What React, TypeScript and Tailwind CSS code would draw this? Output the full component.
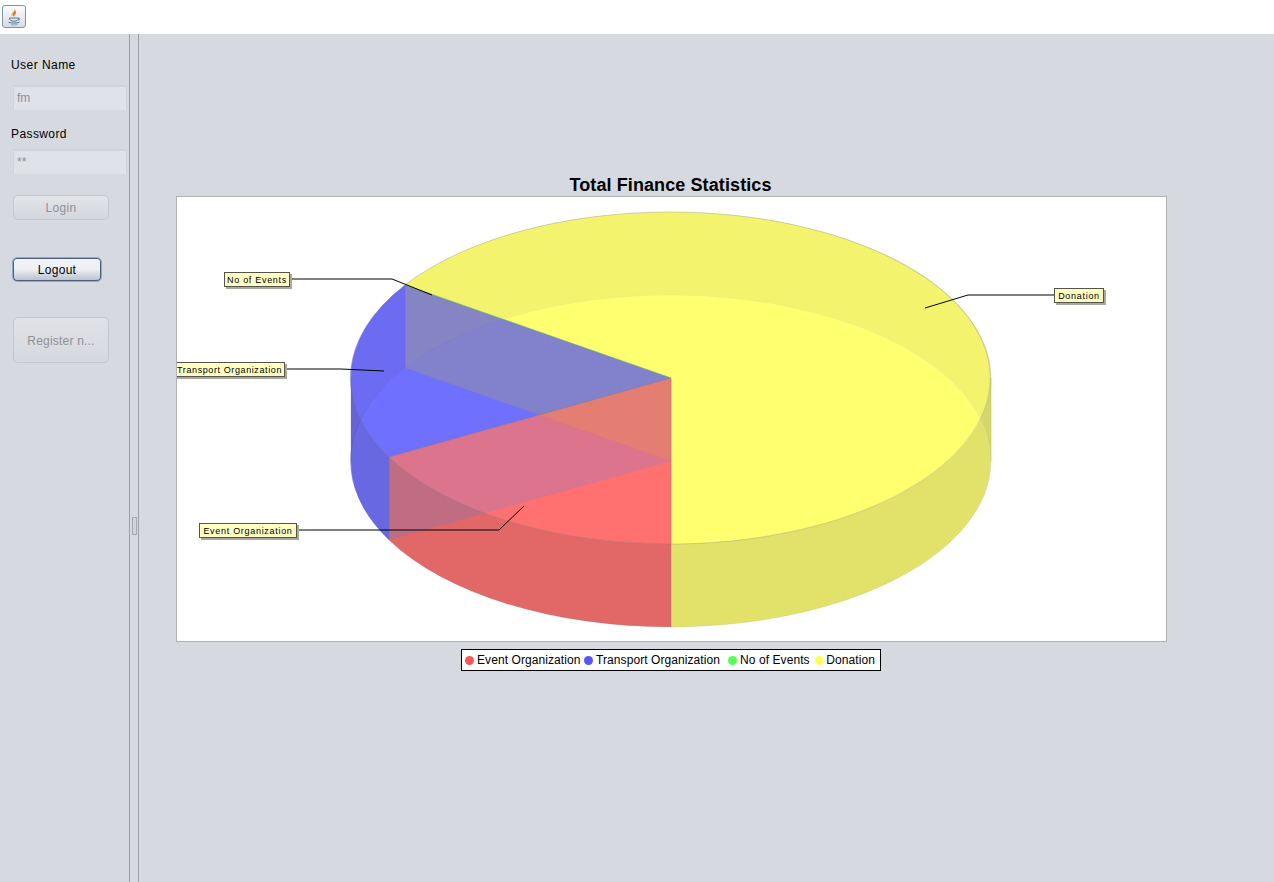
const RX = 320;
const RY = 166;
const arc = (large: number, sweep: number, x: number, y: number) =>
  `A${RX} ${RY} 0 ${large} ${sweep} ${x} ${y}`;

const RED = "#ff5555";
const BLUE = "#5555ff";
const YELLOW = "#ffff55";
const RED_WALL = "#d14a4a";
const BLUE_WALL = "#4a4ad1";
const YELLOW_WALL = "#d1d14e";

// one wedge of the pie, cy moves it between the lid and the floor
function wedges(cy: number) {
  const d = cy - 378;
  return [
    { fill: YELLOW, d: `M671 ${cy}L671 ${544 + d}${arc(1, 0, 405, 285 + d)}Z` },
    { fill: BLUE, d: `M671 ${cy}L405 ${285 + d}${arc(0, 0, 389, 457 + d)}Z` },
    { fill: RED, d: `M671 ${cy}L389 ${457 + d}${arc(0, 0, 671, 544 + d)}Z` },
  ];
}

// the cuts through the middle are much paler than the rim
const cuts = [
  { fill: YELLOW_WALL, opacity: 0.6, d: `M405 285L671 378L671 461L405 368Z` },
  { fill: BLUE_WALL, opacity: 0.2, d: `M405 285L671 378L671 461L405 368Z` },
  { fill: "#b4afbe", opacity: 0.5, d: `M389 457L671 378L671 461L389 540Z` },
];

const rim = [
  { fill: YELLOW_WALL, d: `M991 378${arc(0, 0, 671, 212)}${arc(0, 0, 405, 285)}L405 368${arc(0, 1, 671, 295)}${arc(0, 1, 991, 461)}Z` },
  { fill: BLUE_WALL, d: `M405 285${arc(0, 0, 351, 378)}L351 461${arc(0, 1, 405, 368)}Z` },
  { fill: BLUE_WALL, d: `M351 378${arc(0, 0, 389, 457)}L389 540${arc(0, 1, 351, 461)}Z` },
  { fill: RED_WALL, d: `M389 457${arc(0, 0, 671, 544)}L671 627${arc(0, 1, 389, 540)}Z` },
  { fill: YELLOW_WALL, d: `M671 544${arc(0, 0, 991, 378)}L991 461${arc(0, 1, 671, 627)}Z` },
];

const links = [
  "289,279 392,279 432,295",
  "287,369 341,369 384,371",
  "299,530 499,530 524,506",
  "1054,295 968,295 925,308",
];

const labels = [
  { text: "No of Events", box: "left-[47px] top-[75px] w-[66px] text-center tracking-[0.7px]" },
  { text: "Transport Organization", box: "left-[-4px] top-[165px] w-[112px] text-right pr-[2px] tracking-[0.6px]" },
  { text: "Event Organization", box: "left-[22px] top-[326px] w-[98px] text-center tracking-[0.7px]" },
  { text: "Donation", box: "left-[877px] top-[91px] w-[50px] text-center tracking-[0.7px]" },
];

const legend = [
  { name: "Event Organization", dot: "bg-[#ff5555]", width: "w-[119px]" },
  { name: "Transport Organization", dot: "bg-[#5555ff]", width: "w-[144px]" },
  { name: "No of Events", dot: "bg-[#55ff55]", width: "w-[87px]" },
  { name: "Donation", dot: "bg-[#ffff55]", width: "w-[60px]" },
];

function PieChart() {
  return (
    <svg viewBox="177 197 989 444" width={989} height={444} className="block">
      {wedges(461).map((w) => (
        <path key={w.fill} d={w.d} fill={w.fill} fillOpacity={0.6} />
      ))}
      {cuts.map((w, i) => (
        <path key={i} d={w.d} fill={w.fill} fillOpacity={w.opacity} stroke="#808080" strokeOpacity={0.15} strokeWidth={0.8} />
      ))}
      {rim.map((w, i) => (
        <path key={i} d={w.d} fill={w.fill} fillOpacity={0.62} stroke="#808080" strokeOpacity={0.18} strokeWidth={0.8} />
      ))}
      {wedges(378).map((w) => (
        <path key={w.fill} d={w.d} fill={w.fill} fillOpacity={0.6} stroke="#808080" strokeOpacity={0.3} strokeWidth={0.8} />
      ))}
      <line x1={405} y1={285} x2={671} y2={378} stroke="#55ff55" strokeOpacity={0.4} strokeWidth={0.8} />
      {links.map((p) => (
        <polyline key={p} points={p} fill="none" stroke="#000" strokeWidth={1} />
      ))}
    </svg>
  );
}

function JavaIcon() {
  return (
    <svg viewBox="0 0 16 18" width={16} height={18}>
      <path d="M8.5 1C9.5 3 6.5 4 6.5 6C6.5 7 7.2 8 8 8.8C7.8 7.5 9.8 6.5 10 5C10.1 4 9.5 2 8.5 1Z" fill="#e8762b" />
      <path d="M7 4.5C6 5.5 5.5 6.5 6 8" fill="none" stroke="#f0a050" strokeWidth={0.8} />
      <path d="M3.5 10H12.5C12.5 12 11 13.2 8 13.2C5 13.2 3.5 12 3.5 10Z" fill="none" stroke="#4e7a96" strokeWidth={1} />
      <path d="M12.5 10.2C14.5 9.8 14.5 12 12 12.3" fill="none" stroke="#4e7a96" strokeWidth={0.8} />
      <path d="M2.5 14.2C5 15.4 11 15.4 13.5 14.2" fill="none" stroke="#4e7a96" strokeWidth={1} />
      <path d="M5 16.6C7 17.2 9.5 17.2 11.5 16.4" fill="none" stroke="#6d94ab" strokeWidth={0.8} />
    </svg>
  );
}

export default function App() {
  return (
    <div className="w-[1274px] h-[882px] flex flex-col overflow-hidden bg-[#d6d9df] text-black font-['Liberation_Sans',Arial,sans-serif]">
      <div className="h-[34px] bg-white pl-[2px] pt-[5px] shrink-0">
        <button className="w-[24px] h-[23px] rounded-[3px] border border-[#7b95a8] bg-gradient-to-b from-[#fbfcfd] to-[#d8dde3] flex items-center justify-center">
          <JavaIcon />
        </button>
      </div>

      <div className="flex flex-1 min-h-0">
        <aside className="w-[129px] shrink-0 pl-[11px] pt-[23px] flex flex-col items-start">
          <label className="h-[16px] leading-[16px] text-[12px] tracking-[0.45px]">User Name</label>
          <div className="mt-[12px] ml-[2px] w-[114px] h-[25px] px-[3px] leading-[22px] text-[12px] text-[#8e9197] bg-[#dfe2e6] border-t-2 border-l border-r border-[#d0d3d9]">fm</div>
          <label className="mt-[16px] h-[16px] leading-[16px] text-[12px] tracking-[0.4px]">Password</label>
          <div className="mt-[7px] ml-[2px] w-[114px] h-[25px] px-[3px] leading-[22px] text-[12px] text-[#8e9197] bg-[#dfe2e6] border-t-2 border-l border-r border-[#d0d3d9]">**</div>
          <button className="mt-[21px] ml-[2px] w-[96px] h-[25px] rounded-[5px] border border-[#c2c6cd] bg-gradient-to-b from-[#e3e5e9] to-[#d3d6dc] text-[12px] tracking-[0.3px] text-[#8e9197]">Login</button>
          <button className="mt-[37px] ml-[1px] w-[90px] h-[25px] rounded-[5px] border border-[#86aed3] bg-gradient-to-b from-[#f3f4f7] via-[#eceef2] to-[#b9bec8] text-[12px] tracking-[0.3px] shadow-[inset_0_0_0_1px_#4a5f7c]">Logout</button>
          <button className="mt-[35px] ml-[2px] w-[96px] h-[46px] pt-[1px] rounded-[5px] border border-[#c2c6cd] bg-gradient-to-b from-[#e0e2e7] to-[#d5d8de] text-[12px] tracking-[0.2px] text-[#8e9197]">Register n...</button>
        </aside>

        <div className="w-[10px] shrink-0 border-x border-[#9b9ea5] pl-[2px] pt-[483px]">
          <div className="w-[5px] h-[18px] border border-[#a3a7ae] bg-[#cfd2d8]" />
        </div>

        <main className="flex-1 min-w-0 pt-[140px] pl-[37px]">
          <div className="w-[991px] flex flex-col">
            <h1 className="h-[22px] leading-[22px] pr-[2px] text-center text-[18px] font-bold tracking-[0.1px]">Total Finance Statistics</h1>
            <div className="relative w-[991px] h-[446px] bg-white border border-[#b0b2b6] overflow-hidden">
              <PieChart />
              {labels.map((l) => (
                <div key={l.text} className={`absolute ${l.box} h-[15px] leading-[14px] whitespace-nowrap text-[9px] bg-[#ffffc4] border border-[#555547] shadow-[2px_2px_0_#a8a8a0]`}>
                  {l.text}
                </div>
              ))}
            </div>
            <div className="mt-[7px] ml-[285px] w-[420px] h-[22px] bg-white border border-black flex items-center pl-[3px]">
              {legend.map((item) => (
                <div key={item.name} className={`flex items-center gap-[3px] ${item.width}`}>
                  <span className={`w-[9px] h-[9px] rounded-full ${item.dot}`} />
                  <span className="text-[12px] tracking-[0.08px] whitespace-nowrap">{item.name}</span>
                </div>
              ))}
            </div>
          </div>
        </main>
      </div>
    </div>
  );
}
